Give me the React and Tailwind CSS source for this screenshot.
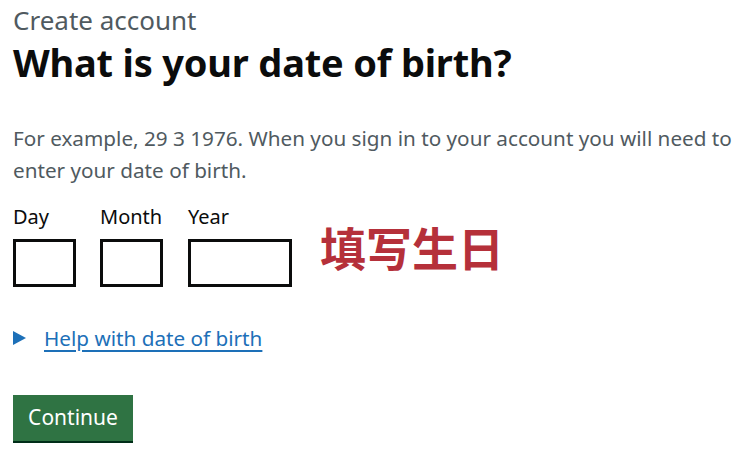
import React from 'react';

const font = { fontFamily: '"Noto Sans", Arial, sans-serif' };

const DateField = ({ label, width, className = '' }) => (
  <div className={`flex flex-col ${className}`}>
    <label className="text-[20px] leading-[24px] text-[#0b0c0c] mb-[10px]">{label}</label>
    <input className={`${width} h-[48px] border-[3px] border-[#0b0c0c] bg-white`} />
  </div>
);

export default function App() {
  return (
    <div className="w-[756px] h-[450px] bg-white pl-[13px] pt-[2px] overflow-hidden" style={font}>
      {/* Caption + heading */}
      <span className="block text-[26px] leading-[36px] text-[#505a5f]">Create account</span>
      <h1 className="text-[38px] leading-[48px] font-bold text-[#0b0c0c] tracking-[-0.2px]">
        What is your date of birth?
      </h1>

      {/* Hint */}
      <p className="mt-[36px] text-[20.7px] leading-[32px] text-[#505a5f] w-[742px]">
        For example, 29 3 1976. When you sign in to your account you will need to enter your date of birth.
      </p>

      {/* Date inputs */}
      <div className="flex items-end mt-[19px]">
        <div className="flex">
          <DateField label="Day" width="w-[63px]" />
          <DateField label="Month" width="w-[63px]" className="ml-[24px]" />
          <DateField label="Year" width="w-[104px]" className="ml-[25px]" />
        </div>
        <span
          className="ml-[28px] mb-[15px] text-[46px] leading-[52px] font-bold text-[#b5303a]"
          style={{ fontFamily: '"Noto Sans CJK SC", sans-serif' }}
        >
          填写生日
        </span>
      </div>

      {/* Details */}
      <div className="flex items-center mt-[37px] gap-[18px]">
        <svg width="13" height="14" viewBox="0 0 13 14" className="shrink-0">
          <polygon points="0,0 13,7 0,14" fill="#1d70b8" />
        </svg>
        <a href="#" className="text-[20.7px] leading-[28px] text-[#1d70b8] underline underline-offset-[4px]">
          Help with date of birth
        </a>
      </div>

      {/* Button */}
      <button className="mt-[43px] w-[120px] h-[46px] bg-[#2f7343] text-white text-[21px] shadow-[0_2px_0_#002d18]">
        Continue
      </button>
    </div>
  );
}
